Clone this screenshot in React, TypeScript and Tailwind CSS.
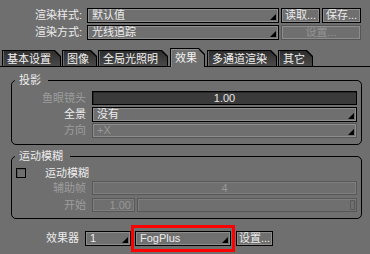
import { ReactNode } from "react";

const font = "font-['Liberation_Sans','Noto_Sans_CJK_SC',sans-serif]";

function Arrow() {
  return (
    <svg width="6" height="6" viewBox="0 0 6 6" className="mb-[2px] mr-[2px] self-end shrink-0">
      <polygon points="6,0 6,6 0,6" fill="#000" />
    </svg>
  );
}

function Select({
  value,
  className = "",
  disabled = false,
}: {
  value: string;
  className?: string;
  disabled?: boolean;
}) {
  return (
    <div
      className={`flex h-[15px] border ${
        disabled ? "border-[#555555] text-[#999999]" : "border-black text-[#ececec]"
      } shadow-[inset_1px_1px_0_#8d8d8d,inset_-1px_-1px_0_#8d8d8d] ${className}`}
    >
      <span className="flex-1 pl-[4px] leading-[13px] whitespace-nowrap">{value}</span>
      <Arrow />
    </div>
  );
}

function Button({
  children,
  className = "",
  disabled = false,
}: {
  children: ReactNode;
  className?: string;
  disabled?: boolean;
}) {
  return (
    <div
      className={`flex h-[15px] items-center justify-center border ${
        disabled ? "border-[#555555] text-[#959595]" : "border-black text-[#ececec]"
      } shadow-[inset_1px_1px_0_#8d8d8d,inset_-1px_-1px_0_#8d8d8d] leading-[13px] whitespace-nowrap ${className}`}
    >
      {children}
    </div>
  );
}

function Field({
  value,
  className = "",
  dark = false,
  align = "center",
}: {
  value: string;
  className?: string;
  dark?: boolean;
  align?: "center" | "right";
}) {
  return (
    <div
      className={`flex h-[14px] items-center border ${
        dark
          ? "border-black bg-[#3a3a3a] text-[#e6e6e6] shadow-[inset_1px_1px_0_#262626]"
          : "border-[#585858] text-[#979797] shadow-[inset_1px_1px_0_#7e7e7e,inset_-1px_-1px_0_#7e7e7e]"
      } ${align === "center" ? "justify-center" : "justify-end pr-[3px]"} leading-[12px] ${className}`}
    >
      {value}
    </div>
  );
}

function Tab({ label, width, active = false, className = "" }: { label: string; width: string; active?: boolean; className?: string }) {
  const shape = "[clip-path:polygon(0_0,calc(100%-6px)_0,100%_6px,100%_100%,0_100%)]";
  return (
    <div
      className={`${shape} ${width} ${
        active ? "relative z-10 -mb-px h-[19px] bg-black" : "h-[16px] bg-black"
      } pl-px pt-px pr-px ${className}`}
    >
      <div
        className={`${shape} flex h-full items-center pl-[4px] leading-[12px] whitespace-nowrap text-[#f2f2f2] ${
          active
            ? "bg-[#6f6f6f] shadow-[inset_1px_1px_0_#8d8d8d]"
            : "bg-gradient-to-b from-[#2e2e2e] to-[#4a4a4a] shadow-[inset_1px_0_0_#6a6a6a]"
        }`}
      >
        {label}
      </div>
    </div>
  );
}

function Row({ label, dim = false, children }: { label: string; dim?: boolean; children: ReactNode }) {
  return (
    <div className="flex h-[14px] items-center">
      <div className={`w-[74px] text-right leading-[12px] ${dim ? "text-[#9d9d9d]" : "text-[#ececec]"}`}>{label}</div>
      <div className="ml-[6px] flex w-[265px]">{children}</div>
    </div>
  );
}

export default function App() {
  return (
    <div className={`${font} h-[254px] w-[370px] overflow-hidden bg-[#6f6f6f] pt-[8px] text-[11px] text-[#ececec]`}>
      <div className="flex h-[15px] items-center">
        <div className="w-[82px] text-right leading-[13px]">渲染样式:</div>
        <Select className="ml-[5px] w-[192px]" value="默认值" />
        <Button className="ml-[2px] w-[39px]">读取...</Button>
        <Button className="ml-[2px] w-[39px]">保存...</Button>
      </div>
      <div className="mt-[2px] flex h-[15px] items-center">
        <div className="w-[82px] text-right leading-[13px]">渲染方式:</div>
        <Select className="ml-[5px] w-[192px]" value="光线追踪" />
        <Button className="ml-[2px] w-[80px]" disabled>
          设置...
        </Button>
      </div>

      <div className="mt-[8px] flex h-[19px] items-end border-b border-black pl-[2px]">
        <Tab label="基本设置" width="w-[59px]" />
        <Tab label="图像" width="w-[35px]" className="ml-[1px]" />
        <Tab label="全局光照明" width="w-[70px]" className="ml-[1px]" />
        <Tab label="效果" width="w-[35px]" className="ml-[2px]" active />
        <Tab label="多通道渲染" width="w-[70px]" className="ml-[2px]" />
        <Tab label="其它" width="w-[35px]" className="ml-[1px]" />
      </div>

      <fieldset className="ml-[11px] mt-[6px] w-[351px] rounded-[5px] border border-black pb-[7px]">
        <legend className="ml-[3px] pl-[4px] pr-[7px] leading-[14px] text-[#ececec]">投影</legend>
        <div className="flex flex-col gap-[2px] pt-[4px]">
          <Row label="鱼眼镜头" dim>
            <Field value="1.00" dark className="w-full" />
          </Row>
          <Row label="全景">
            <Select value="没有" className="h-[14px] w-full" />
          </Row>
          <Row label="方向" dim>
            <Select value="+X" disabled className="h-[14px] w-full" />
          </Row>
        </div>
      </fieldset>

      <fieldset className="ml-[11px] mt-[4px] w-[351px] rounded-[5px] border border-black pb-[6px]">
        <legend className="ml-[3px] pl-[4px] pr-[7px] leading-[14px] text-[#ececec]">运动模糊</legend>
        <div className="pt-[4px]">
          <div className="flex h-[12px] items-center">
            <div className="ml-[4px] h-[10px] w-[10px] border border-black shadow-[inset_1px_1px_0_#5a5a5a]" />
            <div className="ml-[19px] leading-[12px]">运动模糊</div>
          </div>
          <div className="mt-[2px]">
            <Row label="辅助帧" dim>
              <Field value="4" className="w-full" />
            </Row>
          </div>
          <div className="mt-[3px]">
            <Row label="开始" dim>
              <Field value="1.00" align="right" className="w-[43px]" />
              <div className="ml-[2px] flex h-[14px] flex-1 items-center justify-end border border-[#585858] pr-[1px] shadow-[inset_1px_1px_0_#7e7e7e]">
                <div className="h-[10px] w-[5px] rounded-[1px] border border-[#585858]" />
              </div>
            </Row>
          </div>
        </div>
      </fieldset>

      <div className="mt-[6px] flex items-center">
        <div className="w-[79px] text-right leading-[13px]">效果器</div>
        <Select value="1" className="ml-[6px] h-[14px] w-[46px]" />
        <div className="border-[3px] border-[#ff0000] px-[1px] py-[3px]">
          <Select value="FogPlus" className="h-[14px] w-[96px]" />
        </div>
        <Button className="ml-[1px] w-[37px]">设置...</Button>
      </div>
    </div>
  );
}
